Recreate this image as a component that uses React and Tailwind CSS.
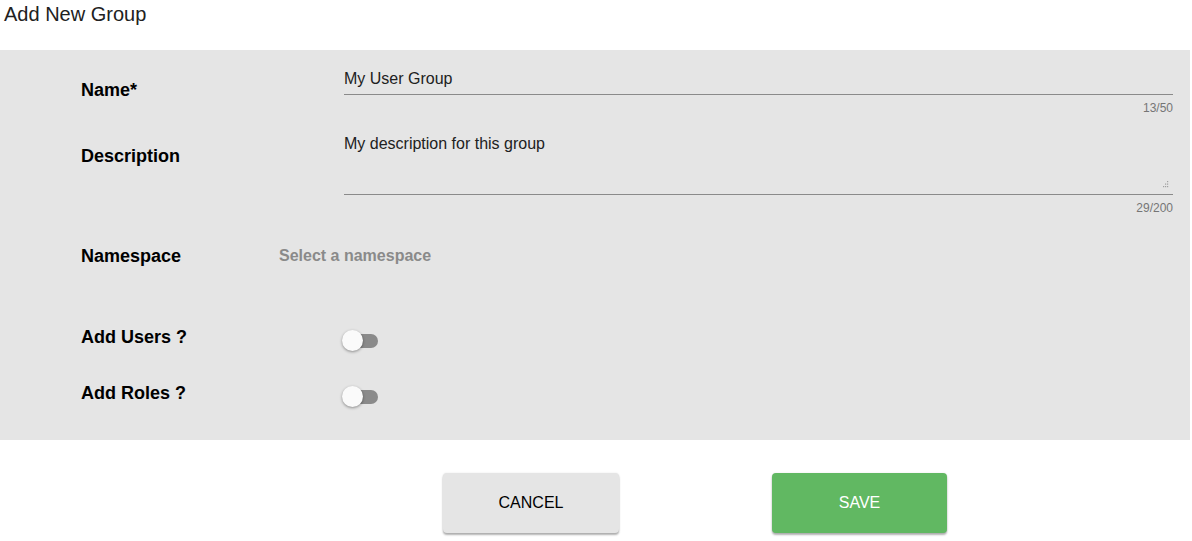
import React from "react";

const font = { fontFamily: '"Liberation Sans", Arial, sans-serif' };

function Switch() {
  return (
    <div className="relative ml-[63px] mt-[5px] h-[21px] w-[37px] shrink-0">
      <div className="absolute left-[2px] top-[4px] h-[14px] w-[34px] rounded-full bg-[#8a8a8a]" />
      <div className="absolute left-0 top-0 h-[21px] w-[21px] rounded-full bg-[#fafafa] shadow-[0_1px_3px_rgba(0,0,0,0.4)]" />
    </div>
  );
}

function Label({ children, mt }) {
  return (
    <div
      className={`w-[198px] shrink-0 text-[18px] font-bold leading-[24px] text-black ${mt}`}
    >
      {children}
    </div>
  );
}

export default function App() {
  return (
    <div className="w-[1192px] h-[541px] bg-white" style={font}>
      <div className="h-[50px] pl-[4px] pt-[2px] text-[20px] leading-[24px] text-[#212121]">
        Add New Group
      </div>
      <div className="w-[1190px] bg-[#e5e5e5] pl-[81px] pt-[19px] pb-[33px]">
        {/* Name */}
        <div className="flex items-start">
          <Label mt="mt-[9px]">Name*</Label>
          <div className="ml-[65px] w-[829px]">
            <div className="border-b border-[#8a8a8a] pb-[5px] text-[16px] leading-[20px] text-[#212121]">
              My User Group
            </div>
            <div className="mt-[5px] text-right text-[12px] leading-[16px] text-[#757575]">
              13/50
            </div>
          </div>
        </div>
        {/* Description */}
        <div className="mt-[18px] flex items-start">
          <Label mt="mt-[10px]">Description</Label>
          <div className="ml-[65px] w-[829px]">
            <div className="relative h-[61px] border-b border-[#8a8a8a] text-[16px] leading-[20px] text-[#212121]">
              My description for this group
              <svg
                className="absolute right-[4px] bottom-[6px]"
                width="7"
                height="7"
                viewBox="0 0 7 7"
              >
                <rect x="5" y="0" width="1.2" height="1.2" fill="#a0a0a0" />
                <rect x="3" y="2.5" width="1.2" height="1.2" fill="#a0a0a0" />
                <rect x="5" y="2.5" width="1.2" height="1.2" fill="#a0a0a0" />
                <rect x="1" y="5" width="1.2" height="1.2" fill="#a0a0a0" />
                <rect x="3" y="5" width="1.2" height="1.2" fill="#a0a0a0" />
                <rect x="5" y="5" width="1.2" height="1.2" fill="#a0a0a0" />
              </svg>
            </div>
            <div className="mt-[5px] text-right text-[12px] leading-[16px] text-[#757575]">
              29/200
            </div>
          </div>
        </div>
        {/* Namespace */}
        <div className="mt-[28px] flex items-start">
          <Label mt="mt-0">Namespace</Label>
          <div className="text-[16px] font-bold leading-[24px] text-[#8a8a8a]">
            Select a namespace
          </div>
        </div>
        {/* Add Users */}
        <div className="mt-[57px] flex items-start">
          <Label mt="mt-0">Add Users ?</Label>
          <Switch />
        </div>
        {/* Add Roles */}
        <div className="mt-[30px] flex items-start">
          <Label mt="mt-0">Add Roles ?</Label>
          <Switch />
        </div>
      </div>
      <div className="mt-[33px] flex pl-[443px]">
        <button className="flex h-[60px] w-[176px] items-center justify-center rounded-[4px] bg-[#e5e5e5] text-[16px] text-black shadow-[0_2px_2px_rgba(0,0,0,0.3),0_0_2px_rgba(0,0,0,0.1)]">
          CANCEL
        </button>
        <button className="ml-[153px] flex h-[60px] w-[175px] items-center justify-center rounded-[4px] bg-[#61b862] text-[16px] text-white shadow-[0_2px_2px_rgba(0,0,0,0.3),0_0_2px_rgba(0,0,0,0.1)]">
          SAVE
        </button>
      </div>
    </div>
  );
}
